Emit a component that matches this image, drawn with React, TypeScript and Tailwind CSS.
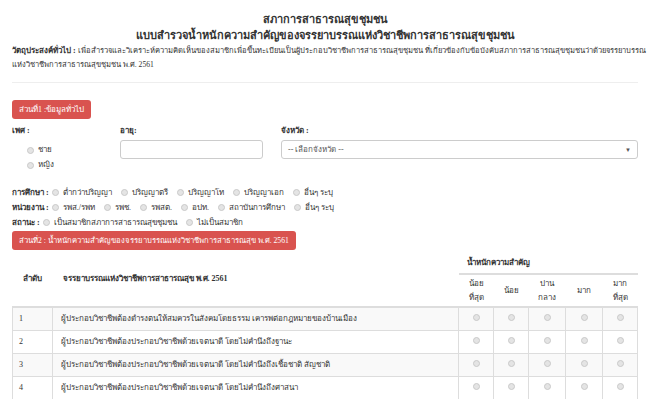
import React from 'react';

const Radio = () => (
  <span className="inline-block w-[7px] h-[7px] rounded-full border border-[#c9c9c9] bg-[#e4e4e4] shrink-0" />
);

const Choice = ({ label }: { label: string }) => (
  <span className="flex items-center gap-[4px] mr-[9px]">
    <Radio />
    <span>{label}</span>
  </span>
);

const rows = [
  'ผู้ประกอบวิชาชีพต้องดำรงตนให้สมควรในสังคมโดยธรรม เคารพต่อกฎหมายของบ้านเมือง',
  'ผู้ประกอบวิชาชีพต้องประกอบวิชาชีพด้วยเจตนาดี โดยไม่คำนึงถึงฐานะ',
  'ผู้ประกอบวิชาชีพต้องประกอบวิชาชีพด้วยเจตนาดี โดยไม่คำนึงถึงเชื้อชาติ สัญชาติ',
  'ผู้ประกอบวิชาชีพต้องประกอบวิชาชีพด้วยเจตนาดี โดยไม่คำนึงถึงศาสนา',
];

const levels = [
  ['น้อย', 'ที่สุด'],
  ['น้อย'],
  ['ปาน', 'กลาง'],
  ['มาก'],
  ['มาก', 'ที่สุด'],
];

export default function App() {
  return (
    <div className="w-[650px] h-[399px] overflow-hidden bg-white px-[12px] text-[8px] leading-[14px] text-[#333]" style={{ fontFamily: '"Liberation Serif", serif' }}>
      <div className="pt-[11px] text-center font-bold text-[11px] leading-[16px] text-[#333]" style={{ fontFamily: '"Liberation Sans", sans-serif' }}>
        <div>สภาการสาธารณสุขชุมชน</div>
        <div>แบบสำรวจน้ำหนักความสำคัญของจรรยาบรรณแห่งวิชาชีพการสาธารณสุขชุมชน</div>
      </div>
      <div className="mt-[1px]">
        <div className="whitespace-nowrap">
          <span className="font-bold">วัตถุประสงค์ทั่วไป : </span>
          <span className="text-[7.6px]">เพื่อสำรวจและวิเคราะห์ความคิดเห็นของสมาชิกเพื่อขึ้นทะเบียนเป็นผู้ประกอบวิชาชีพการสาธารณสุขชุมชน ที่เกี่ยวข้องกับข้อบังคับสภาการสาธารณสุขชุมชนว่าด้วยจรรยาบรรณ</span>
        </div>
        <div className="text-[7.6px]">แห่งวิชาชีพการสาธารณสุขชุมชน พ.ศ. 2561</div>
      </div>
      <div className="mt-[10px] border-t border-[#eee]" />

      <div className="mt-[17px] inline-flex h-[19px] items-center rounded-[3px] bg-[#d9534f] px-[7px] text-white">ส่วนที่1 :ข้อมูลทั่วไป</div>

      <div className="mt-[5px] flex">
        <div className="w-[108px]">
          <div className="font-bold">เพศ :</div>
          <div className="mt-[5px] ml-[15px] flex flex-col gap-[1px]">
            <Choice label="ชาย" />
            <Choice label="หญิง" />
          </div>
        </div>
        <div className="w-[161px]">
          <div className="font-bold">อายุ:</div>
          <div className="mt-[2px] h-[19px] w-[143px] rounded-[3px] border border-[#ccc]" />
        </div>
        <div className="flex-1">
          <div className="font-bold">จังหวัด :</div>
          <div className="mt-[2px] flex h-[19px] items-center justify-between rounded-[3px] border border-[#ccc] px-[6px] text-[#555]">
            <span>-- เลือกจังหวัด --</span>
            <span className="text-[6px]">▼</span>
          </div>
        </div>
      </div>

      <div className="mt-[13px] flex flex-col leading-[15px]">
        <div className="flex items-center">
          <span className="font-bold mr-[3px]">การศึกษา :</span>
          <Choice label="ต่ำกว่าปริญญา" />
          <Choice label="ปริญญาตรี" />
          <Choice label="ปริญญาโท" />
          <Choice label="ปริญญาเอก" />
          <Choice label="อื่นๆ ระบุ" />
        </div>
        <div className="flex items-center">
          <span className="font-bold mr-[3px]">หน่วยงาน :</span>
          <Choice label="รพส./รพท" />
          <Choice label="รพช." />
          <Choice label="รพสต." />
          <Choice label="อปท." />
          <Choice label="สถาบันการศึกษา" />
          <Choice label="อื่นๆ ระบุ" />
        </div>
        <div className="flex items-center">
          <span className="font-bold mr-[3px]">สถานะ :</span>
          <Choice label="เป็นสมาชิกสภาการสาธารณสุขชุมชน" />
          <Choice label="ไม่เป็นสมาชิก" />
        </div>
      </div>

      <div className="mt-[1px] inline-flex h-[19px] items-center rounded-[3px] bg-[#d9534f] px-[7px] text-[7.7px] text-white">ส่วนที่2 : น้ำหนักความสำคัญของจรรยาบรรณแห่งวิชาชีพการสาธารณสุข พ.ศ. 2561</div>

      <table className="mt-[2px] w-full border-collapse">
        <thead>
          <tr className="h-[22px]">
            <th rowSpan={2} className="w-[40px] border-b-2 border-[#ddd] pl-[10px] text-left font-bold">ลำดับ</th>
            <th rowSpan={2} className="border-b-2 border-[#ddd] pl-[10px] text-left font-bold">จรรยาบรรณแห่งวิชาชีพการสาธารณสุข พ.ศ. 2561</th>
            <th colSpan={5} className="border-b-2 border-[#ddd] pl-[8px] text-left font-bold">น้ำหนักความสำคัญ</th>
          </tr>
          <tr className="h-[33px]">
            {levels.map((l, i) => (
              <th key={i} className={`border-b-2 border-[#ddd] text-center font-normal leading-[14px] ${i === 2 || i === 3 ? 'w-[37px]' : 'w-[35px]'}`}>
                {l.map((t) => (
                  <div key={t}>{t}</div>
                ))}
              </th>
            ))}
          </tr>
        </thead>
        <tbody>
          {rows.map((r, i) => (
            <tr key={i} className={`h-[23px] ${i % 2 === 0 ? 'bg-[#f9f9f9]' : 'bg-white'}`}>
              <td className="border border-[#ddd] pl-[6px]">{i + 1}</td>
              <td className="border border-[#ddd] pl-[8px]">{r}</td>
              {levels.map((_, j) => (
                <td key={j} className="border border-[#ddd] text-center">
                  <span className="inline-flex"><Radio /></span>
                </td>
              ))}
            </tr>
          ))}
        </tbody>
      </table>
    </div>
  );
}
